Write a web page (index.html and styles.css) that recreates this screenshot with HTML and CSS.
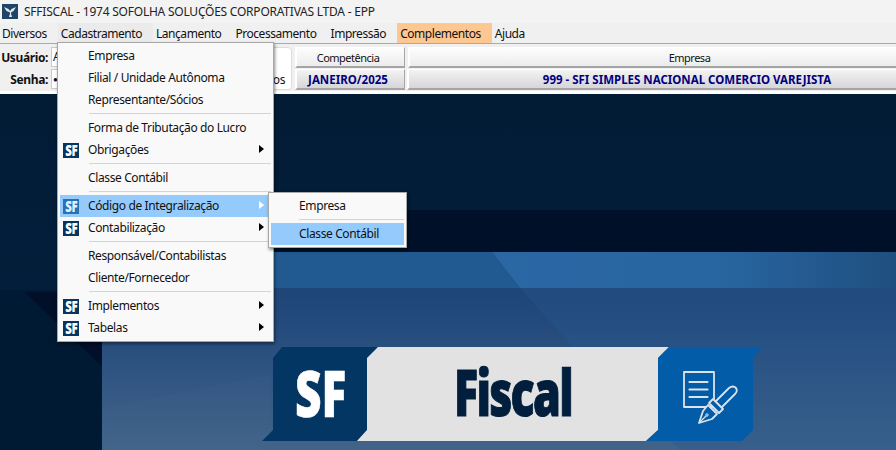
FILE: index.html
```html
<!DOCTYPE html>
<html lang="pt-BR">
<head>
<meta charset="utf-8">
<title>SFFISCAL</title>
<link rel="stylesheet" href="styles.css">
</head>
<body>
<div class="app">
  <header class="titlebar">
    <svg class="appicon" viewBox="0 0 16 16"><rect width="16" height="15" fill="#1f4468"/><path d="M2 3l4.500 2 1.500 2 1.500-2 4.500-2-2.500 4-2.500 1.500v1l1 3.500H7l1-3.500v-1L4.500 7z" fill="#dfe7ef"/></svg>
    <span>SFFISCAL - 1974 SOFOLHA SOLUÇÕES CORPORATIVAS LTDA - EPP</span>
  </header>
  <nav class="menubar">
    <span class="mi">Diversos</span>
    <span class="mi mi-open">Cadastramento</span>
    <span class="mi">Lançamento</span>
    <span class="mi">Processamento</span>
    <span class="mi">Impressão</span>
    <span class="mi mi-orange">Complementos</span>
    <span class="mi">Ajuda</span>
  </nav>
  <section class="toolbar">
    <div class="login">
      <div class="labels">
        <label class="lbl">Usuário:</label>
        <label class="lbl">Senha:</label>
      </div>
      <div class="fields">
        <span class="field">A</span>
        <span class="field field-pass">●</span>
      </div>
      <div class="login-btn">os</div>
    </div>
    <div class="col col-comp">
      <div class="head">Competência</div>
      <div class="val">JANEIRO/2025</div>
    </div>
    <div class="col col-emp">
      <div class="head">Empresa</div>
      <div class="val">999 - SFI SIMPLES NACIONAL COMERCIO VAREJISTA</div>
    </div>
  </section>
  <main class="desktop">
    <svg class="wall" viewBox="0 94 896 356" width="896" height="356">
      <defs>
        <linearGradient id="lower" x1="0" y1="0" x2="0" y2="1">
          <stop offset="0" stop-color="#1b4072"/>
          <stop offset="0.35" stop-color="#234a7c"/>
          <stop offset="1" stop-color="#426489"/>
        </linearGradient>
        <linearGradient id="band" x1="0" y1="0" x2="1" y2="0">
          <stop offset="0" stop-color="#2a67a4"/>
          <stop offset="0.55" stop-color="#2866a1"/>
          <stop offset="1" stop-color="#1f4f80"/>
        </linearGradient>
        <linearGradient id="top" x1="0" y1="0" x2="0" y2="1">
          <stop offset="0" stop-color="#021c36"/>
          <stop offset="1" stop-color="#03203e"/>
        </linearGradient>
      </defs>
      <rect x="0" y="94" width="896" height="356" fill="url(#top)"/>
      <rect x="0" y="290" width="102" height="160" fill="#011a33"/>
      <rect x="102" y="210" width="794" height="42" fill="#011029"/>
      <rect x="102" y="252" width="794" height="198" fill="url(#lower)"/>
      <polygon points="102,252 492,252 520,288 102,288" fill="#215a90"/>
      <polygon points="492,252 896,252 896,288 520,288" fill="url(#band)"/>
      <polygon points="520,288 896,288 896,450 680,450 573,347" fill="#295a90" opacity=".35"/>
      <polygon points="102,408 270,375 270,450 102,450" fill="#4a6d96" opacity=".12"/>
      <polygon points="25,292 102,292 102,367" fill="#010f28"/>
      <polygon points="282,347 378,347 367,358 367,430 357,441 262,441 273,430 273,358" fill="#033662"/>
      <polygon points="378,347 669,347 658,358 658,430 646,441 357,441 367,430 367,358" fill="#e3e2e3"/>
      <polygon points="669,347 763,347 753,358 753,430 742,441 646,441 658,430 658,358" fill="#035ca8"/>
      <text class="sf-big" x="295" y="417" transform="translate(295 0) scale(.72 1) translate(-295 0)">SF</text>
      <text class="fiscal" x="454" y="416" transform="translate(454 0) scale(.7 1) translate(-454 0)">Fiscal</text>
      <g fill="none" stroke="#dde3ea" stroke-width="1.800" stroke-linejoin="round">
        <rect x="684" y="372" width="30" height="35"/>
        <path d="M689.500 382h18M689.500 389.500h18M689.500 397h18" stroke-width="2.200" stroke-linecap="round"/>
        <path d="M715 402L729 388Q733 385 736 388Q738 391 735 394L721 408Z" fill="#035ca8"/>
        <path d="M713 399L723 409L719 413L709 403Z" fill="#035ca8"/>
        <path d="M708 405L717 414L712 419L699 423L703 411Z" fill="#035ca8"/>
        <path d="M699.500 422.500L706 416" stroke-width="1.200"/>
        <circle cx="707" cy="415" r="1.200" stroke-width="1"/>
      </g>
    </svg>
  </main>

  <div class="menu menu-main">
    <div class="row"><span class="ic"></span><span class="tx">Empresa</span></div>
    <div class="row"><span class="ic"></span><span class="tx">Filial / Unidade Autônoma</span></div>
    <div class="row"><span class="ic"></span><span class="tx">Representante/Sócios</span></div>
    <div class="sep"></div>
    <div class="row"><span class="ic"></span><span class="tx">Forma de Tributação do Lucro</span></div>
    <div class="row"><span class="ic sf"><b class="sfg">SF</b></span><span class="tx">Obrigações</span><i class="arrow"></i></div>
    <div class="sep"></div>
    <div class="row"><span class="ic"></span><span class="tx">Classe Contábil</span></div>
    <div class="sep"></div>
    <div class="row row-on"><span class="ic sf"><b class="sfg">SF</b></span><span class="tx">Código de Integralização</span><i class="arrow"></i></div>
    <div class="row"><span class="ic sf"><b class="sfg">SF</b></span><span class="tx">Contabilização</span><i class="arrow"></i></div>
    <div class="sep"></div>
    <div class="row"><span class="ic"></span><span class="tx">Responsável/Contabilistas</span></div>
    <div class="row"><span class="ic"></span><span class="tx">Cliente/Fornecedor</span></div>
    <div class="sep"></div>
    <div class="row"><span class="ic sf"><b class="sfg">SF</b></span><span class="tx">Implementos</span><i class="arrow"></i></div>
    <div class="row"><span class="ic sf"><b class="sfg">SF</b></span><span class="tx">Tabelas</span><i class="arrow"></i></div>
  </div>

  <div class="menu menu-sub">
    <div class="row"><span class="ic"></span><span class="tx">Empresa</span></div>
    <div class="sep"></div>
    <div class="row row-on"><span class="ic"></span><span class="tx">Classe Contábil</span></div>
  </div>
</div>
</body>
</html>
```
FILE: styles.css
```css
* { box-sizing: border-box; }
html, body { margin: 0; padding: 0; }
body { width: 896px; height: 450px; overflow: hidden; font-family: "Noto Sans", "Open Sans", sans-serif; font-size: 12px; letter-spacing: -.38px; color: #111; background: #021e38; }
.app { position: relative; width: 896px; height: 450px; display: flex; flex-direction: column; overflow: hidden; }

.titlebar { height: 23px; flex: none; display: flex; align-items: center; gap: 6px; padding-left: 2px; background: #f3f3f3; color: #222; letter-spacing: -.23px; }
.appicon { width: 16px; height: 16px; flex: none; }

.menubar { height: 21px; flex: none; display: flex; align-items: stretch; background: #f0f0f0; border-bottom: 1px solid #aaa; letter-spacing: -.45px; }
.mi { display: flex; align-items: center; padding: 0 11px 0 3px; height: 20px; }
.mi:first-child { padding-left: 2px; }
.mi-open { background: #ebebeb; }
.mi-orange { background: #fcc791; }

.toolbar { height: 50px; width: 1000px; flex: none; display: flex; gap: 3px; padding: 3px 0 1px 0; background: #f0f0f0; border-bottom: 3px solid #fff; }
.login { width: 292px; flex: none; display: flex; }
.labels { width: 51px; flex: none; display: flex; flex-direction: column; gap: 1px; align-items: flex-end; padding-right: 3px; }
.lbl { height: 21px; line-height: 21px; font-weight: 700; }
.fields { flex: 1; display: flex; flex-direction: column; gap: 2px; }
.field { height: 20px; background: #fff; border: 1px solid #ccc; padding-left: 1px; line-height: 18px; }
.field-pass { font-size: 8px; }
.login-btn { width: 37px; flex: none; background: #fff; border: 1px solid #ddd; border-radius: 4px; margin-left: -1px; display: flex; align-items: flex-end; justify-content: flex-end; padding: 0 6px 1px 0; }
.col { display: flex; flex-direction: column; gap: 1px; }
.col-comp { width: 110px; flex: none; }
.col-emp { width: 562px; flex: none; }
.head, .val { height: 21px; flex: none; display: flex; align-items: center; justify-content: center; border-right: 1px solid #a5a5a5; border-bottom: 2px solid #a5a5a5; border-top: 1px solid #fff; border-left: 2px solid #fff; background: linear-gradient(#fdfdfd, #ececec); font-size: 11px; letter-spacing: -.5px; }
.val { background: linear-gradient(#f3f3f3, #d6d5d9); color: #000080; font-weight: 700; font-size: 11.500px; letter-spacing: 0; }
.col-comp .head, .col-comp .val { padding-right: 5px; }
.col-emp .val { margin-left: -1px; padding-right: 4px; }

.desktop { flex: 1; min-height: 0; }
.wall { display: block; }
.sf-big { font: 800 64px "Open Sans", sans-serif; fill: #fff; letter-spacing: 0; stroke: #fff; stroke-width: .6px; }
.fiscal { font: 800 64px "Open Sans", sans-serif; fill: #011e3c; letter-spacing: -2.500px; stroke: #011e3c; stroke-width: 1.100px; }

.menu { position: absolute; background: #f9f9f9; border: 1px solid #a8a8a8; box-shadow: 1px 2px 3px rgba(0,0,0,.45); padding: 2px; }
.menu-main { left: 57px; top: 42px; width: 217px; height: 300px; }
.menu-sub { left: 268px; top: 192px; width: 139px; height: 56px; }
.row { height: 22px; display: flex; align-items: center; position: relative; }
.menu-main .row { padding-left: 3px; }
.ic { width: 16px; height: 15px; flex: none; margin-right: 9px; }
.menu-sub .ic { margin-right: 12px; }
.tx { padding-bottom: 1px; }
.sf { background: #053560; color: #fff; display: flex; justify-content: center; align-items: center; }
.sfg { display: block; font: 800 16px/15px "Open Sans", sans-serif; letter-spacing: -.6px; transform: scaleX(.72); }
.row-on { background: #95cbfc; }
.row-on .sf { background: #2a70b4; color: #dff0ff; }
.arrow { position: absolute; right: 7px; top: 6px; width: 0; height: 0; border-left: 5px solid #000; border-top: 4px solid transparent; border-bottom: 4px solid transparent; }
.row-on .arrow { border-left-color: #fff; }
.sep { height: 4px; margin: 2px 0 0 29px; border-top: 1px solid #d4d4d4; }
.menu-sub .sep { margin-left: 28px; }
```
